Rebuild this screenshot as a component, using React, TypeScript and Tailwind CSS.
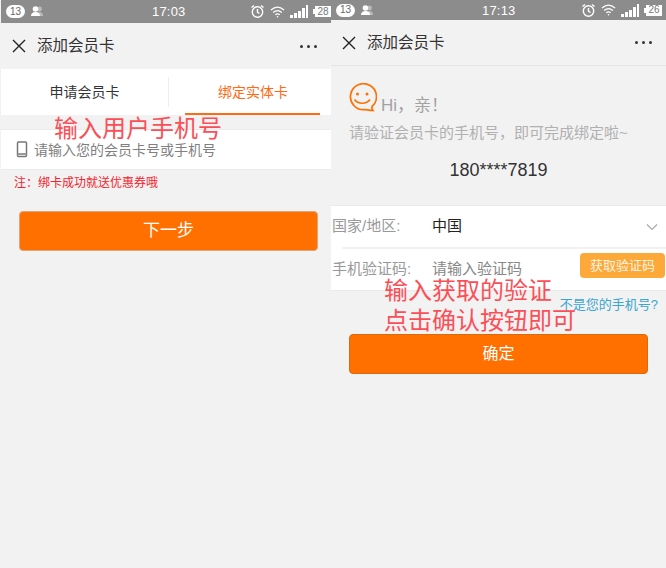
import React from "react";

const cjk = { fontFamily: '"Liberation Sans","Noto Sans CJK SC",sans-serif' };

function Status({ time, batt, h, end }: { time: string; batt: string; h: string; end: string }) {
  return (
    <div className={`relative flex items-center bg-[#8c8c8c] text-white ${h}`}>
      <span className="ml-[5px] flex h-[13px] w-[19px] items-center justify-center rounded-full bg-white text-[10px] leading-none text-[#666]">13</span>
      <svg width="15" height="11" viewBox="0 0 15 11" className="ml-[5px]">
        <circle cx="9.5" cy="3" r="2.4" fill="#bbb" />
        <path d="M6 10c0-3 1.500-4 3.500-4s3.500 1 3.500 4z" fill="#bbb" />
        <circle cx="5.500" cy="3" r="2.800" fill="#fff" />
        <path d="M1 10c0-3 2-4 4.500-4S10 7 10 10z" fill="#fff" />
      </svg>
      <span className="absolute left-[151px] text-[13px] leading-none tracking-[0.2px]">{time}</span>
      <div className={`ml-auto flex items-center gap-[5px] ${end}`}>
        <svg width="15" height="15" viewBox="0 0 15 15" fill="none" stroke="#fff" strokeWidth="1.400">
          <circle cx="7.500" cy="8" r="5.200" />
          <path d="M7.500 5v3.300l2 1.200M1.500 3.500 4 1.500M13.500 3.500 11 1.500" />
        </svg>
        <svg width="15" height="12" viewBox="0 0 15 12" fill="none" stroke="#fff" strokeWidth="1.300">
          <path d="M1 4c4-3.500 9-3.500 13 0M3.200 6.500c2.700-2.300 6-2.300 8.600 0M5.300 8.800c1.300-1 3.100-1 4.400 0" />
          <circle cx="7.500" cy="10.800" r="0.800" fill="#fff" stroke="none" />
        </svg>
        <div className="flex h-[13px] items-end gap-[1px]">
          <i className="h-[3px] w-[3px] bg-white" />
          <i className="h-[5px] w-[3px] bg-white" />
          <i className="h-[7px] w-[3px] bg-white" />
          <i className="h-[10px] w-[3px] bg-white" />
          <i className="h-[13px] w-[2px] bg-white" />
        </div>
        <div className="flex items-center">
          <i className="h-[5px] w-[2px] bg-white" />
          <span className="flex h-[11px] w-[16px] items-center justify-center bg-white text-[10px] leading-none text-[#777]">{batt}</span>
        </div>
      </div>
    </div>
  );
}

function Nav({ h, extra }: { h: string; extra?: string }) {
  return (
    <div className={`flex items-center bg-[#f2f2f2] ${h} ${extra ?? ""}`}>
      <svg width="14" height="14" viewBox="0 0 14 14" className="ml-[11px]" stroke="#222" strokeWidth="1.400">
        <path d="M1 1l12 12M13 1 1 13" />
      </svg>
      <span className="ml-[11px] text-[15.500px] leading-none text-[#333]">添加会员卡</span>
      <div className="ml-auto mr-[14px] flex gap-[4px]">
        <i className="h-[3px] w-[3px] rounded-full bg-[#333]" />
        <i className="h-[3px] w-[3px] rounded-full bg-[#333]" />
        <i className="h-[3px] w-[3px] rounded-full bg-[#333]" />
      </div>
    </div>
  );
}

function Left() {
  return (
    <div className="relative w-[331px] pl-px">
      <Status time="17:03" batt="28" h="h-[23px]" end="mr-0" />
      <Nav h="h-[46px]" />
      <div className="flex h-[46px] bg-white">
        <div className="flex w-[167px] items-center justify-center text-[14px] text-[#333]">申请会员卡</div>
        <div className="my-[8px] w-px bg-[#eee]" />
        <div className="relative flex flex-1 items-center justify-center pl-[6px] text-[14px] text-[#ff6a13]">
          绑定实体卡
          <i className="absolute bottom-0 left-[16px] h-[2px] w-[135px] bg-[#ff6a13]" />
        </div>
      </div>
      <div className="mt-[14px] flex h-[41px] items-center border-y border-[#ebebeb] bg-white pl-[15px]">
        <svg width="12" height="17" viewBox="0 0 12 17" fill="none" stroke="#777" strokeWidth="1.500">
          <rect x="1.500" y="1" width="9" height="14.500" rx="1" />
          <path d="M1.500 13h9" strokeWidth="2" stroke="#999" />
        </svg>
        <span className="ml-[6px] text-[14px] leading-none text-[#808080]">请输入您的会员卡号或手机号</span>
      </div>
      <p className="ml-[13px] mt-[5px] text-[12px] leading-[16px] text-[#f5232d]">注：绑卡成功就送优惠券哦</p>
      <button className="ml-[18px] mt-[20px] flex h-[40px] w-[299px] items-center justify-center rounded-[4px] border border-[#d9a77e] bg-[#ff7000] text-[17px] text-white">
        下一步
      </button>
      <span className="absolute left-[54px] top-[114px] text-[24px] leading-[30px] text-[#fb4f58]">输入用户手机号</span>
    </div>
  );
}

function Right() {
  return (
    <div className="relative flex-1">
      <Status time="17:13" batt="26" h="h-[20px]" end="mr-[4px]" />
      <Nav h="h-[46px]" extra="border-b border-[#e4e4e4]" />
      <div className="ml-[17px] mt-[17px] flex h-[30px] items-end">
        <svg width="29" height="29" viewBox="0 0 29 29" fill="none" stroke="#ff7000" strokeWidth="1.700" className="mb-[1px]">
          <path d="M24 23.500A13 13 0 1 0 17 26.600c2.500.3 6 .8 8 .9-.8-1-1.300-2.500-1-4z" />
          <circle cx="9.500" cy="11" r="1.500" fill="#ff7000" stroke="none" />
          <circle cx="19" cy="11" r="1.500" fill="#ff7000" stroke="none" />
          <path d="M6.500 16.500c3.500 5 12 5 15.500 0" />
        </svg>
        <span className="ml-[4px] text-[17px] leading-[14px] text-[#a3a3a3]">Hi，亲！</span>
      </div>
      <p className="ml-[18px] mt-[10px] text-[15px] leading-[20px] text-[#b0b0b0]">请验证会员卡的手机号，即可完成绑定啦~</p>
      <p className="mt-[16px] text-center text-[18px] leading-[22px] text-[#333]">180****7819</p>
      <div className="mt-[24px] border-y border-[#ebebeb] bg-white">
        <div className="flex h-[41px] items-center text-[15px]">
          <span className="w-[101px] pl-px text-[#999]">国家/地区:</span>
          <span className="text-[#222]">中国</span>
          <svg width="12" height="8" viewBox="0 0 12 8" fill="none" stroke="#aaa" strokeWidth="1.200" className="ml-auto mr-[8px]">
            <path d="M1 1.500l5 5 5-5" />
          </svg>
        </div>
        <div className="ml-[11px] h-[2px] bg-[#f2f2f2]" />
        <div className="flex h-[41px] items-center text-[15px]">
          <span className="w-[101px] pl-px text-[#999]">手机验证码:</span>
          <span className="text-[#888]">请输入验证码</span>
          <button className="ml-auto mr-px mb-[8px] flex h-[25px] w-[85px] items-center justify-center rounded-[4px] bg-[#fca93a] text-[13px] text-[#fdf3e0]">
            获取验证码
          </button>
        </div>
      </div>
      <p className="mr-[8px] mt-[6px] text-right text-[13px] leading-[16px] text-[#3aa5cf]">不是您的手机号?</p>
      <button className="ml-[18px] mt-[21px] flex h-[40px] w-[299px] items-center justify-center rounded-[4px] border border-[#d96a10] bg-[#ff7000] text-[16px] text-white">
        确定
      </button>
      <div className="absolute left-[53px] top-[276px] text-[24px] leading-[30px] text-[#fb4f58]">
        输入获取的验证
        <br />
        点击确认按钮即可
      </div>
    </div>
  );
}

export default function App() {
  return (
    <div className="flex h-[568px] w-[666px] overflow-hidden bg-[#f2f2f2]" style={cjk}>
      <Left />
      <Right />
    </div>
  );
}
